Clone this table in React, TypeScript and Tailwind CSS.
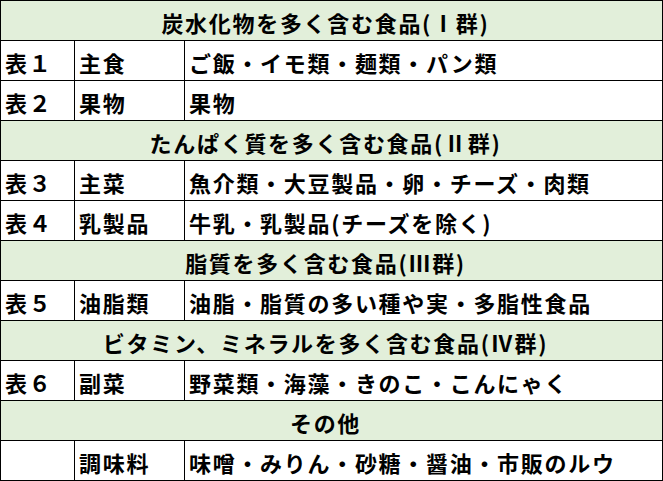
const groups: { title: string; rows: [string, string, string][] }[] = [
  {
    title: '炭水化物を多く含む食品(Ⅰ群)',
    rows: [
      ['表１', '主食', 'ご飯・イモ類・麺類・パン類'],
      ['表２', '果物', '果物'],
    ],
  },
  {
    title: 'たんぱく質を多く含む食品(Ⅱ群)',
    rows: [
      ['表３', '主菜', '魚介類・大豆製品・卵・チーズ・肉類'],
      ['表４', '乳製品', '牛乳・乳製品(チーズを除く)'],
    ],
  },
  {
    title: '脂質を多く含む食品(Ⅲ群)',
    rows: [['表５', '油脂類', '油脂・脂質の多い種や実・多脂性食品']],
  },
  {
    title: 'ビタミン、ミネラルを多く含む食品(Ⅳ群)',
    rows: [['表６', '副菜', '野菜類・海藻・きのこ・こんにゃく']],
  },
  {
    title: 'その他',
    rows: [['', '調味料', '味噌・みりん・砂糖・醤油・市販のルウ']],
  },
];

const cell =
  'h-[40px] border-r border-b border-black flex items-center pl-1 pt-[3px] whitespace-nowrap overflow-hidden';

export default function App() {
  return (
    <div
      className="w-[663px] bg-white text-black text-[22px] font-bold tracking-[1.7px] leading-none"
      style={{ fontFamily: '"Noto Sans CJK JP", "Noto Sans", sans-serif' }}
    >
      <div className="grid grid-cols-[74px_110px_478px] border-t border-l border-black">
        {groups.map((g) => (
          <div key={g.title} className="contents">
            <div className="col-span-3 h-[40px] border-r border-b border-black bg-[#e2efda] flex items-center justify-center pt-[3px] pr-[12px] whitespace-nowrap">
              {g.title}
            </div>
            {g.rows.map((r) => (
              <div key={r[1]} className="contents">
                <div className={cell}>{r[0]}</div>
                <div className={cell}>{r[1]}</div>
                <div className={cell}>{r[2]}</div>
              </div>
            ))}
          </div>
        ))}
      </div>
    </div>
  );
}
